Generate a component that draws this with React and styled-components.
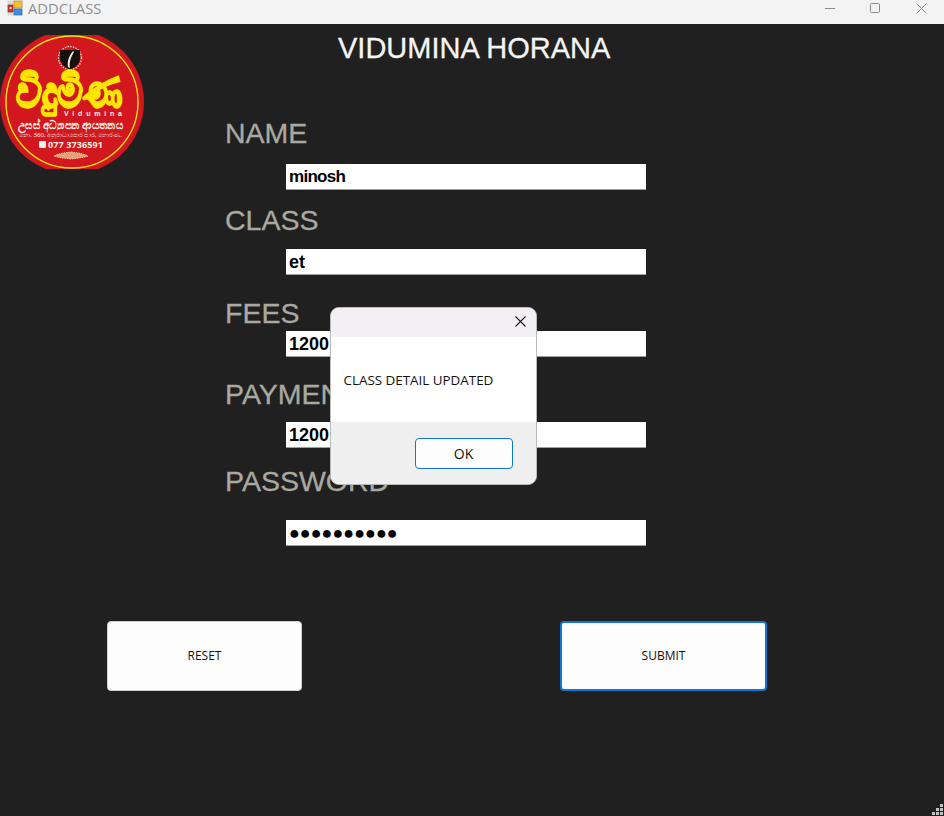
import React from 'react'
import styled, { createGlobalStyle } from 'styled-components'

const GlobalStyle = createGlobalStyle`
  html, body { margin: 0; padding: 0; background: #202020; }
  * { box-sizing: border-box; }
`

const fields = [
  { label: 'NAME', value: 'minosh', top: 0, inputGap: 14, size: 17, tracking: -0.7 },
  { label: 'CLASS', value: 'et', top: 14, inputGap: 12, size: 18, tracking: 0 },
  { label: 'FEES', value: '1200', top: 22, inputGap: 1, size: 18, tracking: 0 },
  { label: 'PAYMENT', value: '1200', top: 21, inputGap: 11, size: 18, tracking: 0 },
  { label: 'PASSWORD', value: '●●●●●●●●●●', top: 17, inputGap: 22, size: 18, tracking: 0 },
]

const AppIcon = () => (
  <svg width="16" height="16" viewBox="0 0 16 16">
    <rect x="0.5" y="0.5" width="15" height="15" fill="#d8d8dc" />
    <rect x="7" y="1" width="8" height="7" fill="#f6c02c" stroke="#b98a1a" strokeWidth="0.6" />
    <rect x="1" y="5" width="5" height="7" fill="#d23a2a" stroke="#8c2118" strokeWidth="0.6" />
    <rect x="7" y="9" width="8" height="6" fill="#3f8fe0" stroke="#2a66a8" strokeWidth="0.6" />
    <rect x="2.6" y="7" width="1.8" height="2" fill="#f7e7df" />
  </svg>
)

const WindowButtons = () => (
  <svg width="112" height="16" viewBox="0 0 112 16">
    <g fill="none" stroke="#8a8a8a" strokeWidth="1">
      <path d="M1 8.5h10" />
      <rect x="46.5" y="3.5" width="9" height="9" rx="1" />
      <path d="M92.5 3.5l10 10M102.5 3.5l-10 10" />
    </g>
  </svg>
)

const ResizeGrip = () => (
  <svg width="12" height="12" viewBox="0 0 12 12">
    <g fill="#c4c4c4">
      <rect x="8" y="0" width="3" height="3" />
      <rect x="4" y="4" width="3" height="3" />
      <rect x="8" y="4" width="3" height="3" />
      <rect x="0" y="8" width="3" height="3" />
      <rect x="4" y="8" width="3" height="3" />
      <rect x="8" y="8" width="3" height="3" />
    </g>
  </svg>
)

const sinhala = "'Noto Sans', sans-serif"

const Logo = () => (
  <svg width="146" height="134" viewBox="0 0 146 134">
    <circle cx="72" cy="67" r="72" fill="#d2171f" />
    <circle cx="72" cy="67" r="66" fill="none" stroke="#f5e20c" strokeWidth="1.4" />
    <circle cx="70" cy="23" r="11.5" fill="none" stroke="#f0d9c0" strokeWidth="1.4" strokeDasharray="1.5 1.2" />
    <path d="M60 15h20v8c0 6-5 9-10 12-5-3-10-6-10-12z" fill="#15110f" />
    <path d="M73 16c-4 5-6 10-5 16l2 1c-1-6 1-11 4-16z" fill="#f2ece4" />
    <text x="16" y="72" textLength="106" lengthAdjust="spacingAndGlyphs" fontFamily={sinhala} fontSize="44" fontWeight="900" stroke="#ffe600" strokeWidth="2" fill="#ffe600">විදුමිණ</text>
    <text x="64" y="81" textLength="58" fontFamily="'Liberation Sans', sans-serif" fontSize="7" fontWeight="700" fill="#f4efe2">Vidumina</text>
    <text x="18" y="94" textLength="105" lengthAdjust="spacingAndGlyphs" fontFamily={sinhala} fontSize="11" fontWeight="700" fill="#f7efe6">උසස් අධ්‍යාපන ආයතනය</text>
    <text x="19" y="102" textLength="103" lengthAdjust="spacingAndGlyphs" fontFamily={sinhala} fontSize="6" fill="#f7efe6">නො. 360, අනුරාධාපොර පාර, හොරණ.</text>
    <rect x="39" y="106" width="7" height="7" rx="1" fill="#f7efe6" />
    <text x="48" y="113" textLength="55" fontFamily="'Open Sans', sans-serif" fontSize="9" fontWeight="700" fill="#f7efe6">077 3736591</text>
    <path d="M54 121c6-3 10-3 17-4 7 1 11 1 17 4-6 2-11 2-17 3-6-1-11-1-17-3z" fill="#e8a070" stroke="#f3d2b0" strokeWidth="1" strokeDasharray="1.5 1" />
  </svg>
)

const App = () => {
  return (
    <Window>
      <GlobalStyle />
      <TitleBar>
        <TitleLeft>
          <AppIcon />
          <WindowTitle>ADDCLASS</WindowTitle>
        </TitleLeft>
        <WindowButtons />
      </TitleBar>

      <Body>
        <TopArea>
          <LogoBox>
            <Logo />
          </LogoBox>
          <div>
            <Heading>VIDUMINA HORANA</Heading>
            <Form>
              {fields.map((f) => (
                <Field key={f.label} $top={f.top}>
                  <FieldLabel>{f.label}</FieldLabel>
                  <FieldInput $gap={f.inputGap} $size={f.size} $tracking={f.tracking}>{f.value}</FieldInput>
                </Field>
              ))}
            </Form>
          </div>
        </TopArea>

        <Actions>
          <ActionButton $width={195}>RESET</ActionButton>
          <ActionButton $width={207} $primary>SUBMIT</ActionButton>
        </Actions>

        <Dialog>
          <DialogHead>
            <svg width="11" height="11" viewBox="0 0 11 11">
              <path d="M.5.5l10 10M10.5.5l-10 10" fill="none" stroke="#1a1a1a" strokeWidth="1.1" />
            </svg>
          </DialogHead>
          <DialogBody>CLASS DETAIL UPDATED</DialogBody>
          <DialogFoot>
            <OkButton>OK</OkButton>
          </DialogFoot>
        </Dialog>

        <Grip>
          <ResizeGrip />
        </Grip>
      </Body>
    </Window>
  )
}

const Window = styled.div`
width:944px;
height:816px;
overflow:hidden;
display:flex;
flex-direction:column;
`

const TitleBar = styled.div`
height:24px;
flex:none;
background-color:#f3f3f3;
display:flex;
align-items:flex-start;
justify-content:space-between;
padding:0 8px 0 7px;
`

const TitleLeft = styled.div`
display:flex;
align-items:flex-start;
gap:5px;
`

const WindowTitle = styled.span`
font-family:'Open Sans', sans-serif;
font-size:14.8px;
line-height:20px;
margin-top:-2px;
color:#8f8f8f;
`

const Body = styled.div`
flex:1;
position:relative;
background-color:#202020;
`

const TopArea = styled.div`
display:grid;
grid-template-columns:226px 1fr;
`

const LogoBox = styled.div`
margin:11px 0 0 0;
line-height:0;
`

const Heading = styled.h1`
margin:6px 0 0 112px;
font-family:'Liberation Sans', Arial, sans-serif;
font-size:29px;
line-height:36px;
font-weight:400;
color:#f4f4f4;
-webkit-text-stroke:0.3px #f4f4f4;
`

const Form = styled.div`
margin-top:51px;
`

const Field = styled.div`
margin-top:${(p) => p.$top}px;
`

const FieldLabel = styled.div`
margin-left:-1px;
padding-bottom:1px;
font-family:'Liberation Sans', Arial, sans-serif;
font-size:28.5px;
line-height:32px;
color:#a9a9a1;
-webkit-text-stroke:0.3px #a9a9a1;
`

const FieldInput = styled.div`
margin:${(p) => p.$gap}px 0 0 60px;
width:360px;
height:26px;
background-color:#fff;
border-bottom:1px solid #a0a0a0;
padding-left:3px;
font-family:'Liberation Sans', Arial, sans-serif;
font-size:${(p) => p.$size}px;
letter-spacing:${(p) => p.$tracking}px;
font-weight:700;
line-height:26px;
color:#000;
`

const Actions = styled.div`
margin:75px 0 0 107px;
width:660px;
display:flex;
justify-content:space-between;
`

const ActionButton = styled.button`
width:${(p) => p.$width}px;
height:70px;
padding:0 0 2px;
background-color:#fdfdfd;
border:${(p) => (p.$primary ? '2px solid #0f78d4' : '1px solid #d0d0d0')};
border-radius:4px;
font-family:'Open Sans', sans-serif;
font-size:12px;
color:#111;
`

const Dialog = styled.div`
position:absolute;
left:329.5px;
top:283px;
width:207px;
height:178px;
border:1px solid #b9b9b9;
border-radius:9px;
overflow:hidden;
display:flex;
flex-direction:column;
background-color:#fff;
`

const DialogHead = styled.div`
height:29px;
background-color:#f3f0f5;
display:flex;
align-items:center;
justify-content:flex-end;
padding:0 10px 2px 0;
`

const DialogBody = styled.div`
height:85px;
padding:35px 0 0 13px;
font-family:'Open Sans', sans-serif;
font-size:13.4px;
line-height:16px;
color:#111;
white-space:nowrap;
`

const DialogFoot = styled.div`
flex:1;
background-color:#efefef;
display:flex;
justify-content:flex-end;
align-items:flex-start;
padding:16px 23px 0 0;
`

const OkButton = styled.button`
width:98px;
height:31px;
padding:0;
background-color:#fdfdfd;
border:1px solid #0f78d4;
border-radius:4px;
font-family:'Open Sans', sans-serif;
font-size:14px;
color:#111;
`

const Grip = styled.div`
position:absolute;
right:0;
bottom:0;
line-height:0;
`

export default App
